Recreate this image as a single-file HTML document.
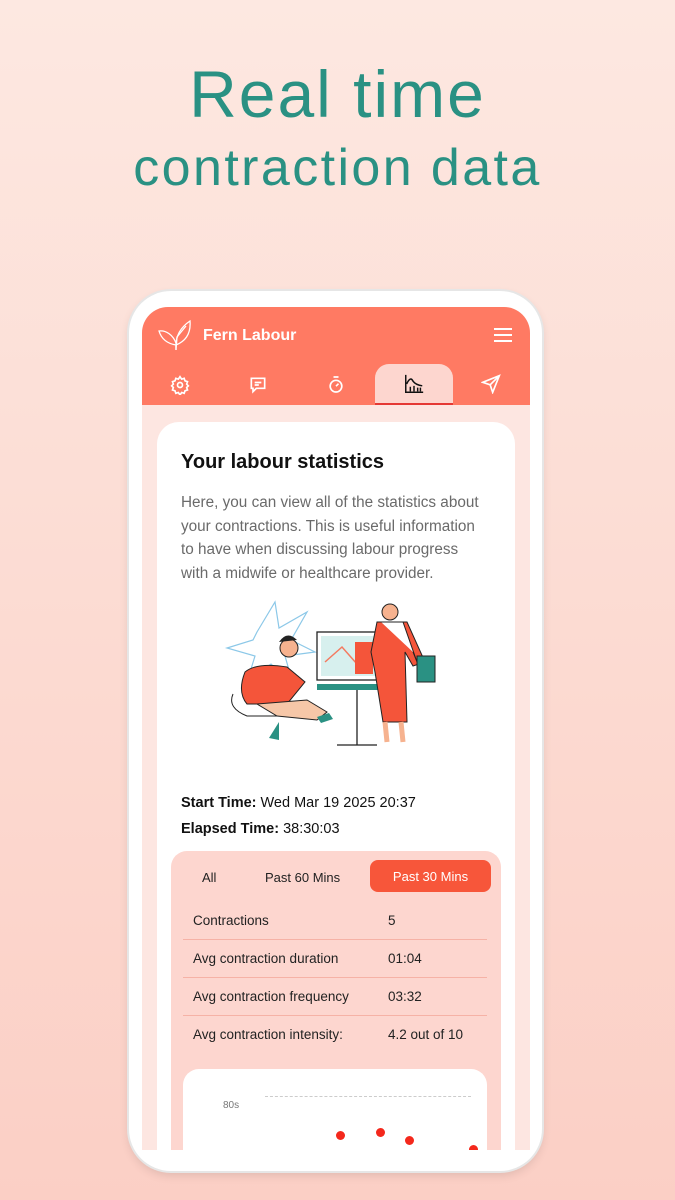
<!DOCTYPE html>
<html><head><meta charset="utf-8"><style>
*{margin:0;padding:0;box-sizing:border-box}
body{width:675px;height:1200px;overflow:hidden;background:linear-gradient(180deg,#fde8e1 0%,#fcd9d0 60%,#fbcfc5 100%);font-family:"Liberation Sans",sans-serif;position:relative}
.h1{position:absolute;top:56px;width:100%;text-align:center;color:#2a9183;font-size:66px;letter-spacing:2px}
.h2{position:absolute;top:138px;width:100%;text-align:center;color:#2a9183;font-size:52px;letter-spacing:2.4px}
.phone{position:absolute;left:129px;top:291px;width:413px;height:880px;border-radius:42px;background:#fff;box-shadow:0 0 0 2px #e6e6e6,0 4px 10px rgba(0,0,0,.12)}
.screen{position:absolute;left:142px;top:307px;width:388px;height:843px;border-radius:26px 26px 0 0;overflow:hidden;background:#fde6e1}
.head{position:absolute;left:0;top:0;width:388px;height:98px;background:#ff7a63}
.title{position:absolute;left:61px;top:20px;color:#fff;font-size:16px;font-weight:bold}
.tab{position:absolute;left:233px;top:57px;width:78px;height:41px;background:#fdd6cf;border-radius:14px 14px 0 0;border-bottom:2px solid #e53935}
.card{position:absolute;left:15px;top:115px;width:358px;height:760px;background:#fff;border-radius:22px}
.card h3{position:absolute;left:24px;top:29px;font-size:20px;font-weight:bold;color:#111}
.desc{position:absolute;left:24px;top:69px;width:330px;font-size:15.3px;line-height:23.5px;color:#6a6a6a;white-space:nowrap}
.st{position:absolute;left:24px;font-size:14.5px;color:#111}
.box{position:absolute;left:14px;top:429px;width:330px;height:340px;background:#fdd6cf;border-radius:16px}
.pill{position:absolute;font-size:13px;color:#222;top:19px}
.row{position:absolute;left:12px;width:304px;height:38px;border-bottom:1px solid #f6b2a6;font-size:13.5px;color:#222}
.row span{position:absolute;top:11px}
.chart{position:absolute;left:12px;top:218px;width:304px;height:140px;background:#fff;border-radius:16px}
.dot{position:absolute;width:9px;height:9px;border-radius:50%;background:#f4281c}
</style></head><body>
<div class="h1">Real time</div>
<div class="h2">contraction data</div>
<div class="phone"></div>
<div class="screen">
 <div class="head">
  <svg style="position:absolute;left:16px;top:12px" width="34" height="32" viewBox="0 0 34 32" fill="none" stroke="#fff" stroke-width="1.3"><path d="M18 31 C17 20 20 10 32 2 C33 14 28 22 18 26"/><path d="M18 26 C12 25 4 22 1 12 C8 11 15 16 18 24"/><path d="M18 31 L19 18 L28 7"/></svg>
  <div class="title">Fern Labour</div>
  <svg style="position:absolute;left:352px;top:21px" width="18" height="14"><path d="M0 1h18M0 7h18M0 13h18" stroke="#fff" stroke-width="2"/></svg>
  <div class="tab"></div>
  <svg style="position:absolute;left:28px;top:68px" width="20" height="20" viewBox="0 0 24 24" fill="none" stroke="#fff" stroke-width="2"><circle cx="12" cy="12" r="3"/><path d="M12 2l2 3 3-1 1 3 3 1-1 3 2 2-2 2 1 3-3 1-1 3-3-1-2 3-2-3-3 1-1-3-3-1 1-3-2-2 2-2-1-3 3-1 1-3 3 1z"/></svg>
  <svg style="position:absolute;left:106px;top:68px" width="20" height="20" viewBox="0 0 24 24" fill="none" stroke="#fff" stroke-width="2"><path d="M4 4h16v12H10l-4 4v-4H4z"/><path d="M8 9h8M8 12h5"/></svg>
  <svg style="position:absolute;left:184px;top:67px" width="20" height="21" viewBox="0 0 24 24" fill="none" stroke="#fff" stroke-width="2"><circle cx="12" cy="14" r="7"/><path d="M9 3h6M12 14l3-3"/></svg>
  <svg style="position:absolute;left:261px;top:66px" width="22" height="22" viewBox="0 0 24 24" fill="none" stroke="#111" stroke-width="1.6"><path d="M3 2v19h19"/><path d="M4 12 Q8 3 11 9 Q14 13 21 14"/><path d="M8 20v-5M12 20v-6M16 20v-4M19 20v-4"/></svg>
  <svg style="position:absolute;left:339px;top:67px" width="20" height="20" viewBox="0 0 24 24" fill="none" stroke="#fff" stroke-width="2"><path d="M22 2L2 10l9 3 3 9z M22 2L11 13"/></svg>
 </div>
 <div class="card">
  <h3>Your labour statistics</h3>
  <div class="desc">Here, you can view all of the statistics about<br>your contractions. This is useful information<br>to have when discussing labour progress<br>with a midwife or healthcare provider.</div>
  <svg style="position:absolute;left:60px;top:170px" width="240" height="160" viewBox="0 0 240 160">
   <path d="M40 40 L58 10 L62 36 L90 20 L74 48 L98 60 L68 64 L76 92 L54 72 L30 90 L38 64 L10 56 L36 48z" fill="none" stroke="#8cc8e8" stroke-width="1.2"/>
   <rect x="100" y="40" width="70" height="48" fill="#fff" stroke="#222" stroke-width="1.3"/>
   <rect x="104" y="44" width="62" height="40" fill="#d7f0ee"/>
   <path d="M108 70 L125 55 L140 72 L160 52" stroke="#f47a60" fill="none" stroke-width="1.5"/>
   <rect x="138" y="50" width="18" height="32" fill="#f4553a"/>
   <rect x="100" y="92" width="80" height="6" fill="#2a9183"/>
   <path d="M140 98v55M120 153h40" stroke="#222" stroke-width="1.3"/>
   <path d="M28 80 Q40 70 70 75 L88 90 L70 112 L30 112 Q20 100 28 80z" fill="#f4553a" stroke="#222"/>
   <circle cx="72" cy="56" r="9" fill="#f6b28f" stroke="#222"/><path d="M62 50 Q70 38 80 48" fill="#222"/>
   <path d="M40 112 L90 108 L110 120 L100 128 L60 124z" fill="#f6c7a8" stroke="#222"/>
   <path d="M100 125 l12 -4 4 6 -12 4z M62 130 l-10 16 10 2z" fill="#2a9183"/>
   <path d="M16 102 Q10 116 30 124 L60 124" fill="none" stroke="#222"/>
   <circle cx="173" cy="20" r="8" fill="#f6b28f" stroke="#222"/>
   <path d="M160 30 L190 30 L208 70 L196 74 L188 60 L190 130 L166 130 L158 80 L154 60z" fill="#f4553a" stroke="#222"/>
   <path d="M164 30 L186 30 L200 70 L196 60" fill="#fff" stroke="#222"/>
   <rect x="200" y="64" width="18" height="26" fill="#2a9183" stroke="#222"/>
   <path d="M168 130 L170 150 M184 130 L186 150" stroke="#f6b28f" stroke-width="5"/>
  </svg>
  <div class="st" style="top:373px"><b>Start Time:</b> Wed Mar 19 2025 20:37</div>
  <div class="st" style="top:399px"><b>Elapsed Time:</b> 38:30:03</div>
  <div class="box">
   <div class="pill" style="left:31px">All</div>
   <div class="pill" style="left:94px">Past 60 Mins</div>
   <div style="position:absolute;left:199px;top:9px;width:121px;height:32px;background:#f7563a;border-radius:8px;color:#fff;font-size:13px;text-align:center;line-height:34px">Past 30 Mins</div>
   <div class="row" style="top:51px"><span style="left:10px">Contractions</span><span style="left:205px">5</span></div>
   <div class="row" style="top:89px"><span style="left:10px">Avg contraction duration</span><span style="left:205px">01:04</span></div>
   <div class="row" style="top:127px"><span style="left:10px">Avg contraction frequency</span><span style="left:205px">03:32</span></div>
   <div class="row" style="top:165px;border:none"><span style="left:10px">Avg contraction intensity:</span><span style="left:205px">4.2 out of 10</span></div>
   <div class="chart">
    <div style="position:absolute;left:40px;top:31px;font-size:10px;color:#777">80s</div>
    <div style="position:absolute;left:82px;top:27px;width:206px;border-top:1px dashed #ccc"></div>
    <div class="dot" style="left:153px;top:62px"></div>
    <div class="dot" style="left:193px;top:59px"></div>
    <div class="dot" style="left:222px;top:67px"></div>
    <div class="dot" style="left:286px;top:76px"></div>
   </div>
  </div>
 </div>
</div>
</body></html>
